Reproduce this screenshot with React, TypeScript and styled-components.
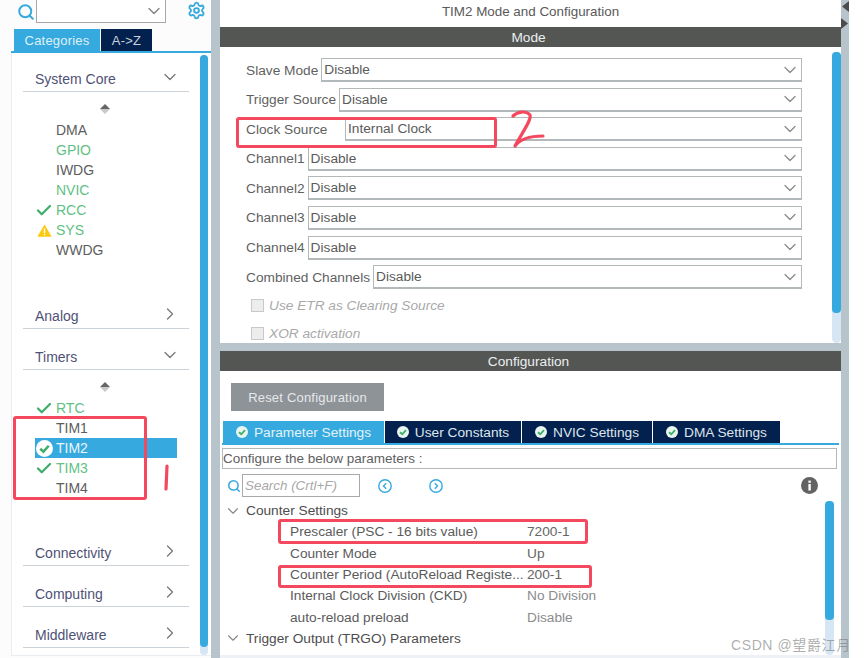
import React from 'react'
import styled, { createGlobalStyle } from 'styled-components'
import { ChevronDown, ChevronRight, Search, Settings, Check } from 'lucide-react'

const GRAY = '#b8c4cb'
const BLUE = '#36a9de'
const NAVY = '#02214e'
const TRACK = '#d6e6f5'
const RED = '#f4485e'
const FONT = '"Liberation Sans", Arial, sans-serif'

const GlobalStyle = createGlobalStyle`
  html, body { margin: 0; padding: 0; background: #fff; overflow: hidden; }
  #root { width: 865px; height: 658px; overflow: hidden; }
  * { box-sizing: border-box; }
`

const Page = styled.div`
  position: relative;
  width: 865px;
  height: 658px;
  overflow: hidden;
  display: flex;
  font-family: ${FONT};
  font-size: 13.7px;
  color: #5a5a5a;
  background: #fff;
`

/* left tree */
const Sidebar = styled.aside`
  width: 211px;
  flex: none;
  display: flex;
  flex-direction: column;
  padding-left: 11px;
  background: #fcfcfc;
`

const SearchRow = styled.div`
  height: 29px;
  display: flex;
  align-items: flex-start;
  color: ${BLUE};
  svg.search { margin: 3px 1px 0 6px; }
  svg.gear { margin: 1px 0 0 21px; }
`

const TopSelect = styled.div`
  width: 130px;
  height: 24px;
  margin-top: -1px;
  border: 1px solid #a8a8a8;
  background: #fff;
  display: flex;
  align-items: center;
  justify-content: flex-end;
  padding-right: 1px;
  color: #7f7f7f;
`

const TabRow = styled.div`
  display: flex;
  gap: 1px;
  padding-left: 3px;
  height: 22px;
`

const SideTab = styled.div<{ $active?: boolean }>`
  width: ${p => (p.$active ? 86 : 51)}px;
  background: ${p => (p.$active ? BLUE : NAVY)};
  color: ${p => (p.$active ? '#dff1fa' : '#c9d2dc')};
  display: flex;
  align-items: center;
  justify-content: center;
  font-size: 13px;
  letter-spacing: 0.2px;
`

const TabLine = styled.div`
  height: 2px;
  background: ${BLUE};
`

const SidePanel = styled.div`
  flex: 1;
  display: flex;
  background: #fff;
  border-left: 1px solid #e8eef2;
  border-bottom: 1px solid #e8eef2;
  margin-bottom: 2px;
  padding-right: 3px;
`

const Nav = styled.nav`
  flex: 1;
  padding: 0 11px 0 11px;
`

const Section = styled.section<{ $first?: boolean }>`
  margin-top: ${p => (p.$first ? 15 : 17)}px;
`

const SectionHead = styled.div`
  height: 24px;
  display: flex;
  align-items: center;
  justify-content: space-between;
  padding: 0 9px 2px 12px;
  border-bottom: 1px solid #ccd3d8;
  color: #4f5275;
  font-size: 14px;
  svg { color: #777; margin-top: -3px; }
`

const ItemList = styled.div<{ $height: number }>`
  height: ${p => p.$height}px;
`

const SortMark = styled.div`
  width: 10px;
  height: 15px;
  margin-left: 77px;
  padding-top: 12px;
  display: flex;
  flex-direction: column;
  align-items: center;
  &::before, &::after {
    content: '';
    flex: none;
    border-left: 5px solid transparent;
    border-right: 5px solid transparent;
  }
  &::before { border-bottom: 5px solid #666; }
  &::after { border-top: 5px solid #c8c8c8; }
`

const SortWrap = styled.div`
  height: 28px;
`

const Item = styled.div<{ $ok?: boolean; $selected?: boolean }>`
  position: relative;
  height: 20px;
  margin-left: 12px;
  width: 142px;
  display: flex;
  align-items: center;
  padding-left: 21px;
  color: ${p => (p.$selected ? '#e8f6fc' : p.$ok ? '#62bf85' : '#5d5d5d')};
  background: ${p => (p.$selected ? BLUE : 'transparent')};
  font-size: 14px;
`

const ItemIcon = styled.span`
  position: absolute;
  left: 0;
  top: 1px;
  width: 18px;
  height: 18px;
  display: flex;
  align-items: center;
  justify-content: center;
`

const VBar = styled.div<{ $width: number; $top?: number }>`
  width: ${p => p.$width}px;
  flex: none;
  display: flex;
  flex-direction: column;
  margin-top: ${p => p.$top ?? 0}px;
  background: ${TRACK};
  border-radius: ${p => p.$width / 2}px;
`

const VThumb = styled.div<{ $height: number }>`
  height: ${p => p.$height}px;
  background: ${BLUE};
  border-radius: 4px;
`

/* right side */
const Splitter = styled.div`
  width: 9px;
  flex: none;
  background: ${GRAY};
`

const Main = styled.main`
  width: 621px;
  flex: none;
  display: flex;
  flex-direction: column;
  background: ${GRAY};
  gap: 8px;
`

const Pane = styled.div<{ $height?: number }>`
  background: #fff;
  display: flex;
  flex-direction: column;
  ${p => (p.$height ? `height: ${p.$height}px;` : 'flex: 1;')}
  min-height: 0;
`

const PaneTitle = styled.div`
  height: 27px;
  display: flex;
  align-items: center;
  justify-content: center;
  padding-bottom: 4px;
  font-size: 13.4px;
  color: #5a5a5a;
`

const DarkBar = styled.div`
  height: 20px;
  flex: none;
  background: #545654;
  color: #eceff0;
  display: flex;
  align-items: center;
  justify-content: center;
  padding-right: 4px;
`

const ModeBody = styled.div`
  flex: 1;
  display: flex;
  min-height: 0;
`

const ModeForm = styled.div`
  flex: 1;
  padding: 11px 30px 0 26px;
  overflow: hidden;
`

const Row = styled.div`
  height: 24px;
  margin-bottom: 5.6px;
  display: flex;
  align-items: center;
`

const RowLabel = styled.span<{ $width?: number }>`
  flex: none;
  ${p => (p.$width ? `width: ${p.$width}px;` : 'margin-right: 3px;')}
  color: #5f5f5f;
`

const SelectBox = styled.div`
  flex: 1;
  height: 24px;
  border: 1px solid #b3b8bb;
  border-bottom-width: 2px;
  padding: 0 1px 0 2px;
  display: flex;
  align-items: center;
  justify-content: space-between;
  color: #5a5a5a;
  svg { color: #8a8a8a; }
`

const CheckRow = styled.div`
  height: 21px;
  margin-bottom: 7.5px;
  display: flex;
  align-items: center;
  gap: 5px;
  padding-left: 5px;
  color: #a9a9a9;
  font-style: italic;
`

const CheckBox = styled.span`
  width: 13px;
  height: 13px;
  background: #ededed;
  border: 1px solid #c9c9c9;
`

const ConfigBody = styled.div`
  flex: 1;
  min-height: 0;
  padding: 12px 2px 0 1px;
  display: flex;
  flex-direction: column;
  border-bottom: 3px solid #eef2f6;
`

const ResetButton = styled.div`
  width: 153px;
  height: 28px;
  margin-left: 10px;
  background: #8e9398;
  color: #e6e8ea;
  display: flex;
  align-items: center;
  justify-content: center;
  font-size: 13px;
  letter-spacing: 0.2px;
`

const ConfigTabs = styled.div`
  display: flex;
  margin: 10px 0 0 2px;
  height: 22px;
  gap: 1px;
`

const ConfigTab = styled.div<{ $active?: boolean; $width: number }>`
  width: ${p => p.$width}px;
  background: ${p => (p.$active ? BLUE : NAVY)};
  color: ${p => (p.$active ? '#e3f3fb' : '#dfe5ec')};
  display: flex;
  align-items: center;
  justify-content: center;
  gap: 6px;
`

const ConfigLine = styled.div`
  height: 2px;
  margin: 0 0 0 1px;
  background: ${BLUE};
`

const Hint = styled.div`
  height: 21px;
  margin: 3px 2px 0 1px;
  border: 1px solid #b3b8bb;
  display: flex;
  align-items: center;
  font-size: 13.5px;
  color: #60605f;
`

const ConfigLower = styled.div`
  flex: 1;
  min-height: 0;
  display: flex;
  padding-right: 5px;
`

const TreeArea = styled.div`
  flex: 1;
`

const SearchLine = styled.div`
  position: relative;
  height: 23px;
  margin-top: 5px;
  display: flex;
  align-items: center;
  color: ${BLUE};
  padding-left: 6px;
`

const SearchBox = styled.div`
  width: 118px;
  height: 23px;
  margin-left: 1px;
  border: 1px solid #a8a8a8;
  padding-left: 2px;
  display: flex;
  align-items: center;
  font-style: italic;
  font-size: 13.4px;
  color: #a8a8a8;
`

const RoundNav = styled.span<{ $gap: number }>`
  margin-left: ${p => p.$gap}px;
  display: flex;
`

const InfoIcon = styled.span`
  position: absolute;
  right: 7px;
  top: 3px;
  display: flex;
`

const TreeList = styled.div`
  margin-top: 3px;
`

const TreeGroup = styled.div`
  height: 21.3px;
  display: flex;
  align-items: center;
  gap: 4px;
  padding-left: 3px;
  color: #4d4d4d;
  svg { color: #888; }
`

const TreeRow = styled.div`
  height: 21.3px;
  display: flex;
  align-items: center;
  padding-left: 69px;
`

const TreeName = styled.span`
  width: 237px;
  flex: none;
  white-space: nowrap;
  color: #5b5b5b;
`

const TreeValue = styled.span<{ $muted?: boolean }>`
  color: ${p => (p.$muted ? '#8b8b8b' : '#666')};
`

const EdgeArrows = styled.div`
  width: 8px;
  flex: none;
  display: flex;
  flex-direction: column;
  gap: 4px;
  padding-top: 1px;
  background: ${GRAY};
  svg { display: block; }
`

/* things drawn over the screenshot */
const RedBox = styled.div<{ $l: number; $t: number; $w: number; $h: number }>`
  position: absolute;
  left: ${p => p.$l}px;
  top: ${p => p.$t}px;
  width: ${p => p.$w}px;
  height: ${p => p.$h}px;
  border: 3px solid ${RED};
  border-radius: 3px;
`

const Scribble = styled.svg`
  position: absolute;
  left: 0;
  top: 0;
  pointer-events: none;
`

const Watermark = styled.div`
  position: absolute;
  left: 731px;
  top: 634px;
  font-size: 14px;
  letter-spacing: 0.6px;
  color: rgba(120, 120, 120, 0.6);
  font-family: ${FONT}, "Noto Sans CJK SC", sans-serif;
`

const OkBadge = ({ size = 12, bg = '#e9f6ef', fg = '#3fae6b' }: { size?: number; bg?: string; fg?: string }) => (
  <svg width={size} height={size} viewBox="0 0 16 16">
    <circle cx="8" cy="8" r="8" fill={bg} />
    <path d="M4 8.3 7 11l5-5.6" fill="none" stroke={fg} strokeWidth="2.4" />
  </svg>
)

const Warn = () => (
  <svg width="15" height="13" viewBox="0 0 15 13">
    <path d="M7.5 0.5 14.7 12.8H0.3Z" fill="#fbc90f" />
    <rect x="6.8" y="4.4" width="1.4" height="4.6" fill="#fff" />
    <rect x="6.8" y="9.8" width="1.4" height="1.5" fill="#fff" />
  </svg>
)

const RoundArrow = ({ right }: { right?: boolean }) => (
  <svg width="14" height="14" viewBox="0 0 14 14" fill="none" stroke={BLUE} strokeWidth="1.4">
    <circle cx="7" cy="7" r="6.2" />
    <path d={right ? 'M5.8 4.3 8.5 7l-2.7 2.7' : 'M8.2 4.3 5.5 7l2.7 2.7'} />
  </svg>
)

const modeRows = [
  { label: 'Slave Mode' },
  { label: 'Trigger Source' },
  { label: 'Clock Source', value: 'Internal Clock', width: 99 },
  { label: 'Channel1' },
  { label: 'Channel2' },
  { label: 'Channel3' },
  { label: 'Channel4' },
  { label: 'Combined Channels' },
]

const coreItems = [
  { name: 'DMA' },
  { name: 'GPIO', ok: true },
  { name: 'IWDG' },
  { name: 'NVIC', ok: true },
  { name: 'RCC', ok: true, icon: 'check' },
  { name: 'SYS', ok: true, icon: 'warn' },
  { name: 'WWDG' },
]

const timerItems = [
  { name: 'RTC', ok: true, icon: 'check' },
  { name: 'TIM1' },
  { name: 'TIM2', selected: true, icon: 'badge' },
  { name: 'TIM3', ok: true, icon: 'check' },
  { name: 'TIM4' },
]

const params = [
  { name: 'Prescaler (PSC - 16 bits value)', value: '7200-1' },
  { name: 'Counter Mode', value: 'Up' },
  { name: 'Counter Period (AutoReload Registe...', value: '200-1' },
  { name: 'Internal Clock Division (CKD)', value: 'No Division', muted: true },
  { name: 'auto-reload preload', value: 'Disable', muted: true },
]

const tabs = [
  { name: 'Parameter Settings', width: 161, active: true },
  { name: 'User Constants', width: 136 },
  { name: 'NVIC Settings', width: 130 },
  { name: 'DMA Settings', width: 127 },
]

type TreeItem = { name: string; ok?: boolean; selected?: boolean; icon?: string }

const renderItem = (item: TreeItem) => (
  <Item key={item.name} $ok={item.ok} $selected={item.selected}>
    {item.icon && (
      <ItemIcon>
        {item.icon === 'check' && <Check size={19} color="#3fae6b" strokeWidth={3} />}
        {item.icon === 'warn' && <Warn />}
        {item.icon === 'badge' && <OkBadge size={17} bg="#ffffff" />}
      </ItemIcon>
    )}
    {item.name}
  </Item>
)

const Category = ({ name, open, first, height, items }: {
  name: string
  open?: boolean
  first?: boolean
  height?: number
  items?: TreeItem[]
}) => (
  <Section $first={first}>
    <SectionHead>
      {name}
      {open ? <ChevronDown size={20} strokeWidth={1.5} /> : <ChevronRight size={20} strokeWidth={1.5} />}
    </SectionHead>
    {items && height && (
      <ItemList $height={height}>
        <SortWrap><SortMark /></SortWrap>
        {items.map(renderItem)}
      </ItemList>
    )}
  </Section>
)

export default function App() {
  return (
    <Page>
      <GlobalStyle />
      <Sidebar>
        <SearchRow>
          <Search className="search" size={18} strokeWidth={2.6} />
          <TopSelect><ChevronDown size={20} strokeWidth={1.5} /></TopSelect>
          <Settings className="gear" size={19} strokeWidth={2.4} />
        </SearchRow>
        <TabRow>
          <SideTab $active>Categories</SideTab>
          <SideTab>A-&gt;Z</SideTab>
        </TabRow>
        <TabLine />
        <SidePanel>
          <Nav>
            <Category first open name="System Core" height={196} items={coreItems} />
            <Category name="Analog" />
            <Category open name="Timers" height={155} items={timerItems} />
            <Category name="Connectivity" />
            <Category name="Computing" />
            <Category name="Middleware" />
          </Nav>
          <VBar $width={8} $top={2}><VThumb $height={592} /></VBar>
        </SidePanel>
      </Sidebar>
      <Splitter />
      <Main>
        <Pane $height={343}>
          <PaneTitle>TIM2 Mode and Configuration</PaneTitle>
          <DarkBar>Mode</DarkBar>
          <ModeBody>
            <ModeForm>
              {modeRows.map(r => (
                <Row key={r.label}>
                  <RowLabel $width={r.width}>{r.label}</RowLabel>
                  <SelectBox>
                    {r.value ?? 'Disable'}
                    <ChevronDown size={20} strokeWidth={1.5} />
                  </SelectBox>
                </Row>
              ))}
              <CheckRow><CheckBox />Use ETR as Clearing Source</CheckRow>
              <CheckRow><CheckBox />XOR activation</CheckRow>
            </ModeForm>
            <VBar $width={9} $top={5}><VThumb $height={261} /></VBar>
          </ModeBody>
        </Pane>
        <Pane>
          <DarkBar>Configuration</DarkBar>
          <ConfigBody>
            <ResetButton>Reset Configuration</ResetButton>
            <ConfigTabs>
              {tabs.map(t => (
                <ConfigTab key={t.name} $active={t.active} $width={t.width}>
                  <OkBadge />
                  {t.name}
                </ConfigTab>
              ))}
            </ConfigTabs>
            <ConfigLine />
            <Hint>Configure the below parameters :</Hint>
            <ConfigLower>
              <TreeArea>
                <SearchLine>
                  <Search size={14} strokeWidth={2.6} />
                  <SearchBox>Search (Crtl+F)</SearchBox>
                  <RoundNav $gap={18}><RoundArrow /></RoundNav>
                  <RoundNav $gap={37}><RoundArrow right /></RoundNav>
                  <InfoIcon>
                    <svg width="17" height="17" viewBox="0 0 17 17">
                      <circle cx="8.5" cy="8.5" r="8.5" fill="#636363" />
                      <rect x="7.4" y="7" width="2.4" height="6.5" fill="#fff" />
                      <rect x="7.4" y="3.6" width="2.4" height="2.2" fill="#fff" />
                    </svg>
                  </InfoIcon>
                </SearchLine>
                <TreeList>
                  <TreeGroup><ChevronDown size={18} strokeWidth={1.5} />Counter Settings</TreeGroup>
                  {params.map(p => (
                    <TreeRow key={p.name}>
                      <TreeName>{p.name}</TreeName>
                      <TreeValue $muted={p.muted}>{p.value}</TreeValue>
                    </TreeRow>
                  ))}
                  <TreeGroup><ChevronDown size={18} strokeWidth={1.5} />Trigger Output (TRGO) Parameters</TreeGroup>
                </TreeList>
              </TreeArea>
              <VBar $width={9} $top={32}><VThumb $height={119} /></VBar>
            </ConfigLower>
          </ConfigBody>
        </Pane>
      </Main>
      <EdgeArrows>
        <svg width="8" height="13" viewBox="0 0 8 13"><path d="M8 0 1 5.5 8 11Z" fill="#4c4c4c" /></svg>
        <svg width="8" height="13" viewBox="0 0 8 13"><path d="M0 0 7 5.5 0 11Z" fill="#4c4c4c" /></svg>
      </EdgeArrows>

      <RedBox $l={13} $t={416} $w={134} $h={84} />
      <RedBox $l={236} $t={117} $w={261} $h={31} />
      <RedBox $l={278} $t={519} $w={310} $h={25} />
      <RedBox $l={278} $t={565} $w={314} $h={23} />
      <Scribble width="865" height="658" viewBox="0 0 865 658" fill="none" stroke={RED} strokeWidth="3.2" strokeLinecap="round" strokeLinejoin="round">
        <path d="M167 466 166 489" />
        <path d="M513 116C517 112 526 110 530 115 532 120 520 136 515 146 520 139 530 136 543 136" />
      </Scribble>
      <Watermark>CSDN @望爵江月</Watermark>
    </Page>
  )
}
